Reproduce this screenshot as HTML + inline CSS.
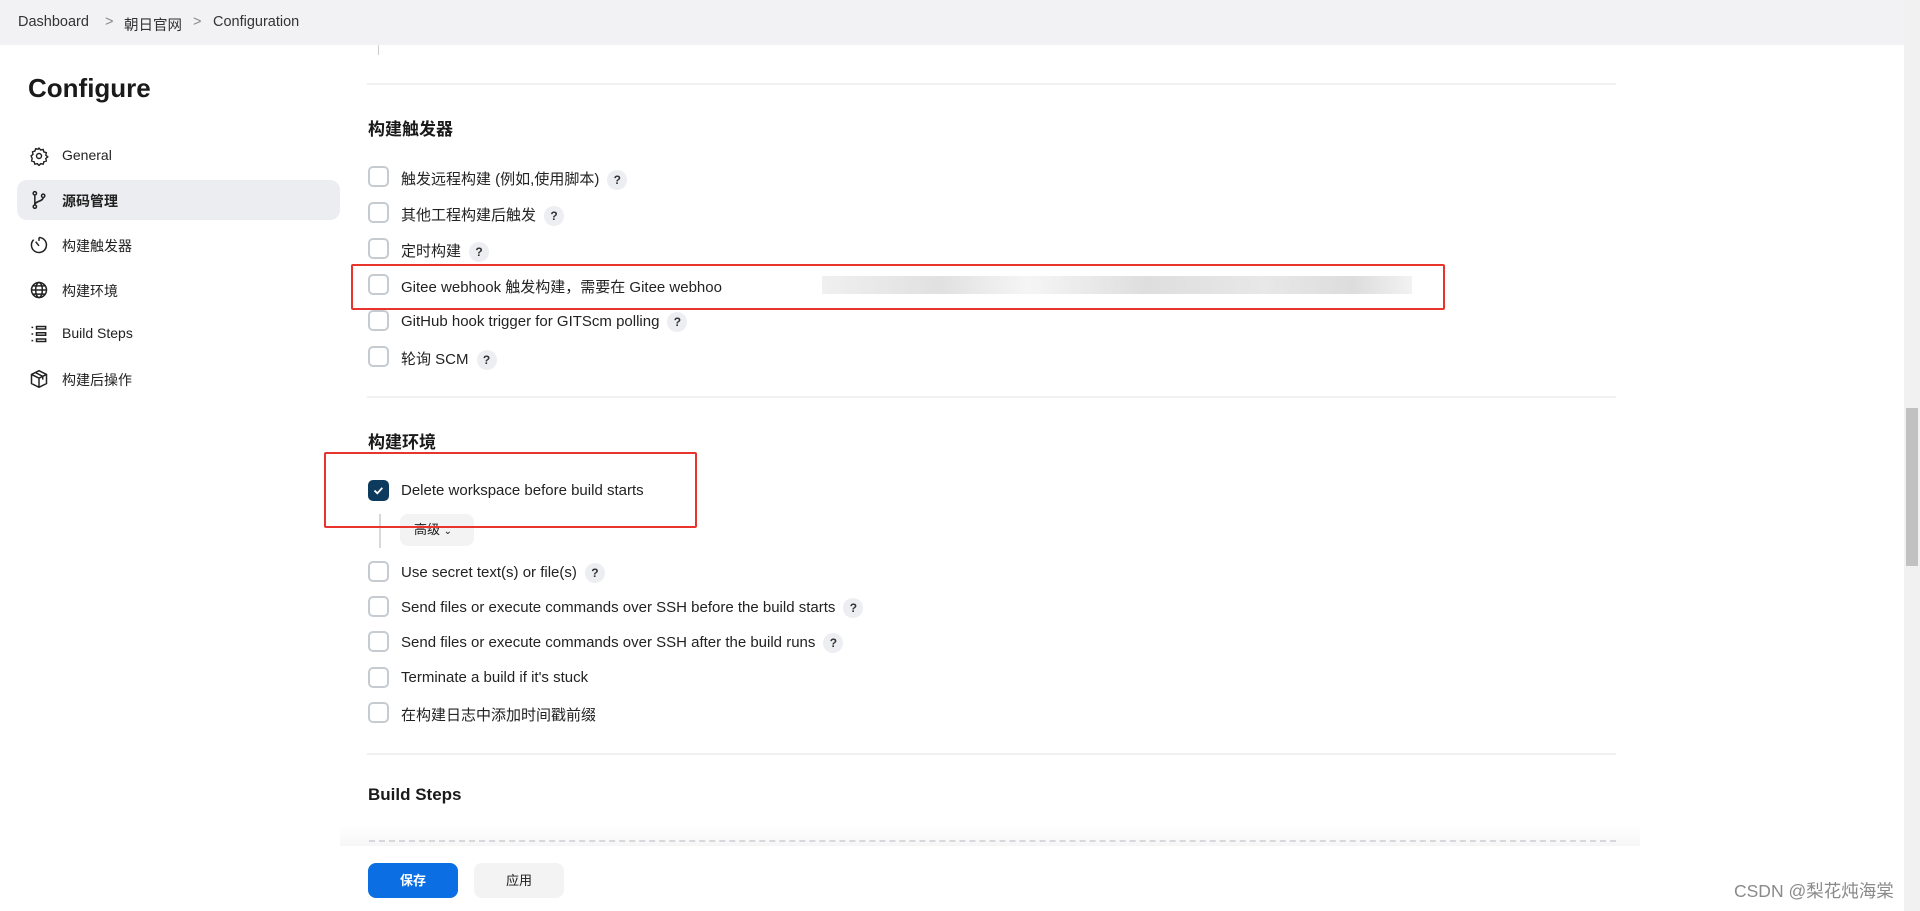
<!DOCTYPE html>
<html><head><meta charset="utf-8"><style>
*{box-sizing:border-box;margin:0;padding:0}
body{width:1920px;height:911px;overflow:hidden;background:#fff;font-family:"Liberation Sans","Noto Sans CJK SC",sans-serif;color:#1a1a1a;position:relative}
.bc{position:absolute;left:0;top:0;width:1904px;height:45px;background:#f2f2f4;font-size:14.5px;color:#333}
.bc span{position:absolute;top:14px}
.a{position:absolute}
.side{position:absolute;left:17px;width:323px;height:40px;font-size:14px;color:#222}
.side .ic{position:absolute;left:12px;top:10px;width:20px;height:20px}
.side .t{position:absolute;left:45px;top:11px}
.hl{background:#ebedf0;border-radius:10px}
.row{position:absolute;left:368px;height:22px;font-size:15px;color:#222}
.cb{position:absolute;left:0;top:0;width:21px;height:21px;border:2px solid #c6cbd1;border-radius:5px;background:#fff}
.row .t{position:absolute;left:33px;top:2px;white-space:nowrap}
.q{display:inline-block;width:20px;height:20px;border-radius:50%;background:#eceef1;font-size:12px;font-weight:bold;text-align:center;line-height:20px;margin-left:8px;vertical-align:middle;color:#333}
.hd{position:absolute;left:368px;font-size:17px;font-weight:bold}
.div{position:absolute;left:367px;width:1249px;height:2px;background:#f0f1f3}
.red{position:absolute;border:2px solid #e8342c;border-radius:2px}
</style></head><body>
<div class="bc"><span style="left:18px">Dashboard</span><span style="left:105px;color:#888">&gt;</span><span style="left:124px">朝日官网</span><span style="left:193px;color:#888">&gt;</span><span style="left:213px">Configuration</span></div>
<div class="a" style="left:378px;top:45px;width:1px;height:10px;background:#ccc"></div>
<div class="a" style="left:28px;top:73px;font-size:26px;font-weight:bold">Configure</div>

<div class="side" style="top:136px"><svg class="ic" viewBox="0 0 24 24" fill="none" stroke="#222" stroke-width="1.7"><circle cx="12" cy="12" r="3"/><path d="M12 2.5l2 2.3 3-.6.9 2.9 2.9.9-.6 3 2.3 2-2.3 2 .6 3-2.9.9-.9 2.9-3-.6-2 2.3-2-2.3-3 .6-.9-2.9-2.9-.9.6-3L2.5 12l2.3-2-.6-3 2.9-.9.9-2.9 3 .6z"/></svg><span class="t">General</span></div>
<div class="side hl" style="top:180px"><svg class="ic" viewBox="0 0 24 24" fill="none" stroke="#222" stroke-width="1.8"><circle cx="7" cy="4" r="2"/><circle cx="7" cy="20" r="2"/><circle cx="17" cy="7" r="2"/><path d="M7 6v12M17 9c0 5-10 4-10 9"/></svg><span class="t" style="font-weight:bold">源码管理</span></div>
<div class="side" style="top:225px"><svg class="ic" viewBox="0 0 24 24" fill="none" stroke="#222" stroke-width="1.8"><path d="M12 3a9 9 0 1 1-6.4 2.6"/><path d="M12 3v4M8 8l4 5"/></svg><span class="t">构建触发器</span></div>
<div class="side" style="top:270px"><svg class="ic" viewBox="0 0 24 24" fill="none" stroke="#222" stroke-width="1.8"><circle cx="12" cy="12" r="9"/><ellipse cx="12" cy="12" rx="4" ry="9"/><path d="M3 12h18M4.5 7h15M4.5 17h15"/></svg><span class="t">构建环境</span></div>
<div class="side" style="top:314px"><svg class="ic" viewBox="0 0 24 24" fill="none" stroke="#222" stroke-width="1.8"><path d="M3 4h2M3 12h2M3 20h2M9 3h11v3H9zM9 10.5h11v3H9zM9 18h11v3H9z"/></svg><span class="t">Build Steps</span></div>
<div class="side" style="top:359px"><svg class="ic" viewBox="0 0 24 24" fill="none" stroke="#222" stroke-width="1.8"><path d="M12 2l9 4.5v11L12 22l-9-4.5v-11z M3 6.5l9 4.5 9-4.5M12 11v11M7.5 4.2l9 4.6v4"/></svg><span class="t">构建后操作</span></div>

<div class="div" style="top:83px"></div>
<div class="hd" style="top:115px">构建触发器</div>
<div class="row" style="top:166px"><div class="cb"></div><span class="t">触发远程构建 (例如,使用脚本)<span class="q">?</span></span></div>
<div class="row" style="top:202px"><div class="cb"></div><span class="t">其他工程构建后触发<span class="q">?</span></span></div>
<div class="row" style="top:238px"><div class="cb"></div><span class="t">定时构建<span class="q">?</span></span></div>
<div class="row" style="top:274px"><div class="cb"></div><span class="t">Gitee webhook 触发构建，需要在 Gitee webhoo</span></div>
<div class="a" style="left:822px;top:276px;width:590px;height:18px;background:linear-gradient(90deg,#ececec,#d9d9d9 20%,#f3f3f3 35%,#d6d6d6 55%,#e2e2e2 75%,#d4d4d4 90%,#efefef);opacity:.8"></div>
<div class="row" style="top:310px"><div class="cb"></div><span class="t">GitHub hook trigger for GITScm polling<span class="q">?</span></span></div>
<div class="row" style="top:346px"><div class="cb"></div><span class="t">轮询 SCM<span class="q">?</span></span></div>
<div class="red" style="left:351px;top:264px;width:1094px;height:46px"></div>

<div class="div" style="top:396px"></div>
<div class="hd" style="top:428px">构建环境</div>
<div class="row" style="top:480px"><div class="cb" style="background:#0d3b5e;border-color:#0d3b5e"><svg width="17" height="17" viewBox="0 0 17 17" style="position:absolute;left:0;top:0"><path d="M4.5 8.5l2.8 2.8 5-5.5" fill="none" stroke="#fff" stroke-width="1.8"/></svg></div><span class="t">Delete workspace before build starts</span></div>
<div class="a" style="left:379px;top:514px;width:2px;height:34px;background:#d8d8da"></div>
<div class="a" style="left:400px;top:514px;width:74px;height:32px;background:#f3f3f4;border-radius:8px;font-size:13px;line-height:32px;padding-left:14px">高级 <span style="font-size:10px">&#8964;</span></div>
<div class="red" style="left:324px;top:452px;width:373px;height:76px"></div>
<div class="row" style="top:561px"><div class="cb"></div><span class="t">Use secret text(s) or file(s)<span class="q">?</span></span></div>
<div class="row" style="top:596px"><div class="cb"></div><span class="t">Send files or execute commands over SSH before the build starts<span class="q">?</span></span></div>
<div class="row" style="top:631px"><div class="cb"></div><span class="t">Send files or execute commands over SSH after the build runs<span class="q">?</span></span></div>
<div class="row" style="top:667px"><div class="cb"></div><span class="t">Terminate a build if it's stuck</span></div>
<div class="row" style="top:702px"><div class="cb"></div><span class="t">在构建日志中添加时间戳前缀</span></div>
<div class="div" style="top:753px"></div>
<div class="hd" style="top:785px">Build Steps</div>

<div class="a" style="left:340px;top:826px;width:1300px;height:20px;background:linear-gradient(#fff,#f6f6f7)"></div>
<div class="a" style="left:369px;top:840px;width:1247px;border-top:2px dashed #d6d8db"></div>
<div class="a" style="left:0;top:848px;width:1904px;height:63px;background:#fff"></div>
<div class="a" style="left:368px;top:863px;width:90px;height:35px;background:#0b6fe3;border-radius:8px;color:#fff;font-size:13px;font-weight:bold;text-align:center;line-height:35px">保存</div>
<div class="a" style="left:474px;top:863px;width:90px;height:35px;background:#f3f3f4;border-radius:8px;font-size:13px;text-align:center;line-height:35px">应用</div>

<div class="a" style="left:1904px;top:0;width:16px;height:911px;background:#f1f1f1"></div>
<div class="a" style="left:1906px;top:408px;width:12px;height:158px;background:#c1c1c1"></div>
<div class="a" style="left:1734px;top:878px;font-size:17.5px;color:#8a8a8a">CSDN @梨花炖海棠</div>
</body></html>
